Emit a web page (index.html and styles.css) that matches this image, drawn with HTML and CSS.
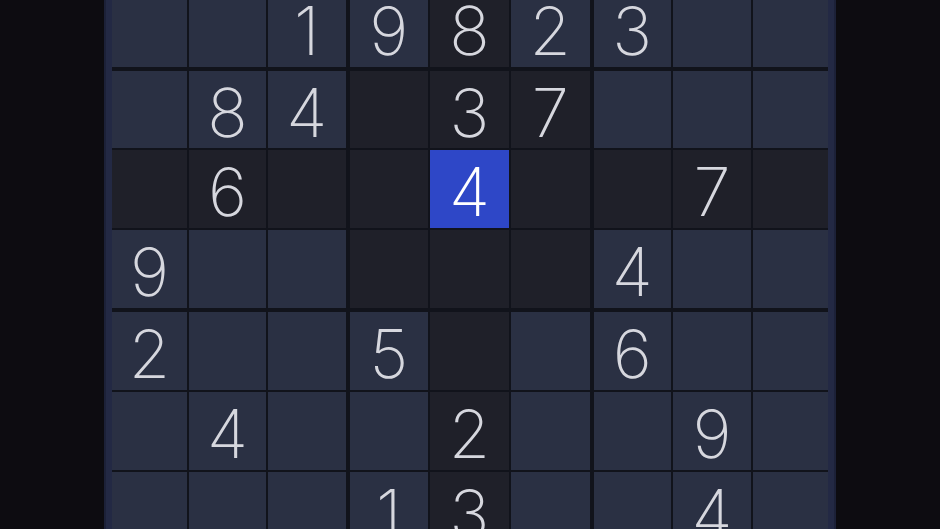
FILE: index.html
```html
<!DOCTYPE html>
<html>
<head>
<meta charset="utf-8">
<link rel="stylesheet" href="styles.css">
</head>
<body>
<div class="screen">
  <div class="board">
    <div class="grid">
      <div class="cell"></div><div class="cell"></div><div class="cell">1</div><div class="cell bl">9</div><div class="cell hl">8</div><div class="cell">2</div><div class="cell bl">3</div><div class="cell"></div><div class="cell"></div>

      <div class="cell bt"></div><div class="cell bt">8</div><div class="cell bt">4</div><div class="cell bt bl hl"></div><div class="cell bt hl">3</div><div class="cell bt hl">7</div><div class="cell bt bl"></div><div class="cell bt"></div><div class="cell bt"></div>

      <div class="cell hl"></div><div class="cell hl">6</div><div class="cell hl"></div><div class="cell bl hl"></div><div class="cell sel">4</div><div class="cell hl"></div><div class="cell bl hl"></div><div class="cell hl">7</div><div class="cell hl"></div>

      <div class="cell">9</div><div class="cell"></div><div class="cell"></div><div class="cell bl hl"></div><div class="cell hl"></div><div class="cell hl"></div><div class="cell bl">4</div><div class="cell"></div><div class="cell"></div>

      <div class="cell bt">2</div><div class="cell bt"></div><div class="cell bt"></div><div class="cell bt bl">5</div><div class="cell bt hl"></div><div class="cell bt"></div><div class="cell bt bl">6</div><div class="cell bt"></div><div class="cell bt"></div>

      <div class="cell"></div><div class="cell">4</div><div class="cell"></div><div class="cell bl"></div><div class="cell hl">2</div><div class="cell"></div><div class="cell bl"></div><div class="cell">9</div><div class="cell"></div>

      <div class="cell"></div><div class="cell"></div><div class="cell"></div><div class="cell bl">1</div><div class="cell hl">3</div><div class="cell"></div><div class="cell bl"></div><div class="cell">4</div><div class="cell"></div>
    </div>
  </div>
</div>
</body>
</html>
```

FILE: styles.css
```css
html, body {
  margin: 0;
  padding: 0;
  background: #0d0c11;
  overflow: hidden;
}

.screen {
  width: 940px;
  height: 529px;
  overflow: hidden;
  display: flex;
}

.board {
  margin-left: 104px;
  width: 715.5px;
  padding: 0 8.5px 0 8px;
  height: 560px;
  background: #232944;
  box-shadow: inset 2px 0 0 #1c2138, inset -2px 0 0 #1c2138;
}

.grid {
  margin-top: -11px;
  display: grid;
  grid-template-columns: 75px 77px 77.5px 80.5px 79px 78.5px 79.5px 78px 74.5px;
  grid-template-rows: 78px 79px 78px 78px 80px 78px 78px;
  gap: 2px;
  background: #11131b;
}

.cell {
  background: #2a3043;
  color: #d6d7de;
  font-family: Inter, "Noto Sans", sans-serif;
  font-weight: 200;
  font-size: 67px;
  line-height: 1;
  display: flex;
  align-items: center;
  justify-content: center;
  padding-top: 5px;
  box-sizing: border-box;
}

.cell.bl { margin-left: 2px; }
.cell.bt { margin-top: 2px; }

.cell.hl {
  background: #1f2029;
}

.cell.sel {
  background: #2e47c7;
  color: #ffffff;
}
```
